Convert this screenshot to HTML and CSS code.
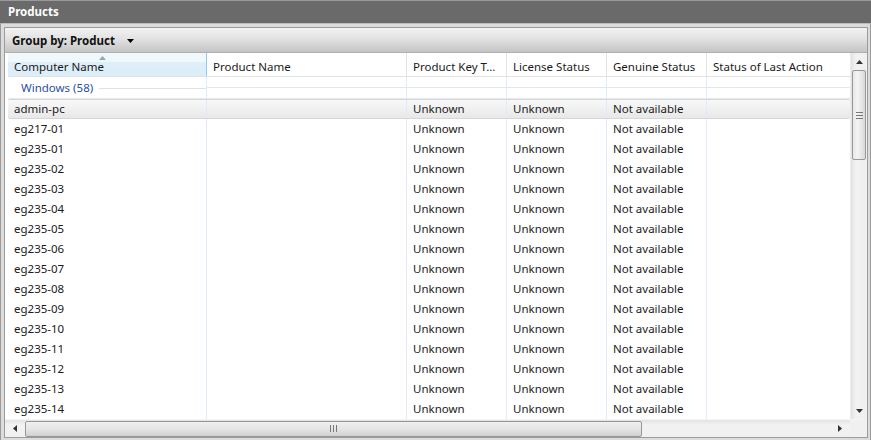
FILE: index.html
```html
<!DOCTYPE html>
<html>
<head>
<meta charset="utf-8">
<link rel="stylesheet" href="styles.css">
</head>
<body>
<div class="window">
  <div class="titlebar">Products</div>
  <div class="frame">
    <div class="panel">
      <div class="groupbar">
        <span class="groupby">Group by: Product</span>
        <svg class="dd" width="7" height="4" viewBox="0 0 7 4"><path d="M0 0H7L3.5 4Z" fill="#000"/></svg>
      </div>
      <div class="main">
        <div class="grid-area">
          <div class="gridbody">
            <div class="row header">
              <div class="cell sorted">Computer Name<svg class="sort" width="7" height="4" viewBox="0 0 7 4"><path d="M3.5 0L7 4H0Z" fill="#8fa9bd"/></svg></div>
              <div class="cell">Product Name</div>
              <div class="cell">Product Key T...</div>
              <div class="cell">License Status</div>
              <div class="cell">Genuine Status</div>
              <div class="cell">Status of Last Action</div>
            </div>
            <div class="row group">
              <div class="cell first"><span class="gname">Windows (58)</span></div>
              <div class="cell"></div><div class="cell"></div><div class="cell"></div><div class="cell"></div><div class="cell"></div>
            </div>
            <div class="row data hover"><div class="cell">admin-pc</div><div class="cell"></div><div class="cell">Unknown</div><div class="cell">Unknown</div><div class="cell">Not available</div><div class="cell"></div></div>
            <div class="row data"><div class="cell">eg217-01</div><div class="cell"></div><div class="cell">Unknown</div><div class="cell">Unknown</div><div class="cell">Not available</div><div class="cell"></div></div>
            <div class="row data"><div class="cell">eg235-01</div><div class="cell"></div><div class="cell">Unknown</div><div class="cell">Unknown</div><div class="cell">Not available</div><div class="cell"></div></div>
            <div class="row data"><div class="cell">eg235-02</div><div class="cell"></div><div class="cell">Unknown</div><div class="cell">Unknown</div><div class="cell">Not available</div><div class="cell"></div></div>
            <div class="row data"><div class="cell">eg235-03</div><div class="cell"></div><div class="cell">Unknown</div><div class="cell">Unknown</div><div class="cell">Not available</div><div class="cell"></div></div>
            <div class="row data"><div class="cell">eg235-04</div><div class="cell"></div><div class="cell">Unknown</div><div class="cell">Unknown</div><div class="cell">Not available</div><div class="cell"></div></div>
            <div class="row data"><div class="cell">eg235-05</div><div class="cell"></div><div class="cell">Unknown</div><div class="cell">Unknown</div><div class="cell">Not available</div><div class="cell"></div></div>
            <div class="row data"><div class="cell">eg235-06</div><div class="cell"></div><div class="cell">Unknown</div><div class="cell">Unknown</div><div class="cell">Not available</div><div class="cell"></div></div>
            <div class="row data"><div class="cell">eg235-07</div><div class="cell"></div><div class="cell">Unknown</div><div class="cell">Unknown</div><div class="cell">Not available</div><div class="cell"></div></div>
            <div class="row data"><div class="cell">eg235-08</div><div class="cell"></div><div class="cell">Unknown</div><div class="cell">Unknown</div><div class="cell">Not available</div><div class="cell"></div></div>
            <div class="row data"><div class="cell">eg235-09</div><div class="cell"></div><div class="cell">Unknown</div><div class="cell">Unknown</div><div class="cell">Not available</div><div class="cell"></div></div>
            <div class="row data"><div class="cell">eg235-10</div><div class="cell"></div><div class="cell">Unknown</div><div class="cell">Unknown</div><div class="cell">Not available</div><div class="cell"></div></div>
            <div class="row data"><div class="cell">eg235-11</div><div class="cell"></div><div class="cell">Unknown</div><div class="cell">Unknown</div><div class="cell">Not available</div><div class="cell"></div></div>
            <div class="row data"><div class="cell">eg235-12</div><div class="cell"></div><div class="cell">Unknown</div><div class="cell">Unknown</div><div class="cell">Not available</div><div class="cell"></div></div>
            <div class="row data"><div class="cell">eg235-13</div><div class="cell"></div><div class="cell">Unknown</div><div class="cell">Unknown</div><div class="cell">Not available</div><div class="cell"></div></div>
            <div class="row data"><div class="cell">eg235-14</div><div class="cell"></div><div class="cell">Unknown</div><div class="cell">Unknown</div><div class="cell">Not available</div><div class="cell"></div></div>
          </div>
          <div class="vscroll">
            <div class="arrowbtn"><svg width="7" height="4" viewBox="0 0 7 4"><path d="M3.5 0L7 4H0Z" fill="#333"/></svg></div>
            <div class="vtrack">
              <div class="vthumb"><svg width="7" height="7" viewBox="0 0 7 7"><path d="M0 .5H7M0 3.5H7M0 6.5H7" stroke="#777" stroke-width="1"/></svg></div>
            </div>
            <div class="arrowbtn"><svg width="7" height="4" viewBox="0 0 7 4"><path d="M0 0H7L3.5 4Z" fill="#333"/></svg></div>
          </div>
        </div>
        <div class="hrow">
          <div class="hscroll">
            <div class="harrow"><svg width="4" height="7" viewBox="0 0 4 7"><path d="M4 0V7L0 3.5Z" fill="#333"/></svg></div>
            <div class="hthumb"><svg width="7" height="7" viewBox="0 0 7 7"><path d="M.5 0V7M3.5 0V7M6.5 0V7" stroke="#777" stroke-width="1"/></svg></div>
            <div class="hspace"></div>
            <div class="harrow"><svg width="4" height="7" viewBox="0 0 4 7"><path d="M0 0V7L4 3.5Z" fill="#333"/></svg></div>
          </div>
          <div class="corner"></div>
        </div>
      </div>
    </div>
  </div>
</div>
</body>
</html>
```
FILE: styles.css
```css
html, body {
  margin: 0;
  padding: 0;
}
body {
  width: 871px;
  height: 440px;
  overflow: hidden;
  font-family: "Noto Sans", "Open Sans", sans-serif;
  font-size: 11.5px;
  color: #1a1a1a;
}
.window {
  height: 440px;
  display: flex;
  flex-direction: column;
  background: #d4d4d4;
}
.titlebar {
  height: 23px;
  background: #6a6a6a;
  border-top: 1px solid #9a9a9a;
  color: #fff;
  font-weight: bold;
  line-height: 22px;
  padding-left: 8px;
}
.frame {
  flex: 1;
  display: flex;
  padding: 3px 4px 2px 4px;
  border-top: 1px solid #bdbdbd;
  border-left: 1px solid #9a9a9a;
  border-right: 1px solid #9a9a9a;
  background: #dcdcdc;
}
.panel {
  flex: 1;
  display: flex;
  flex-direction: column;
  border: 1px solid #9c9c9c;
  background: #fff;
  margin-left: -1px;
  margin-right: -1px;
}
.groupbar {
  height: 24px;
  display: flex;
  align-items: center;
  padding-left: 7px;
  background: linear-gradient(#f3f3f3, #e2e2e2 45%, #c4c4c4);
  border-bottom: 1px solid #b0b0b0;
}
.groupby {
  font-weight: bold;
  color: #111;
}
.dd {
  margin-left: 12px;
  margin-top: 1px;
}
.main {
  flex: 1;
  display: flex;
  flex-direction: column;
}
.grid-area {
  flex: 1;
  display: flex;
}
.gridbody {
  flex: 1;
  padding-left: 3px;
  overflow: hidden;
}
.row {
  display: grid;
  grid-template-columns: 199px 200px 100px 100px 100px 143px;
}
.cell {
  padding-left: 6px;
  white-space: nowrap;
  overflow: hidden;
}
.row .cell {
  border-right: 1px solid #e1ecf7;
}
.row .cell:last-child {
  border-right: none;
}
.header {
  height: 23px;
  line-height: 19px;
  border-bottom: 1px solid #e2e2e2;
  background: #fff;
}
.header .cell {
  padding-top: 4px;
  border-right: 1px solid #e3e3e3;
  position: relative;
}
.header .cell:last-child {
  border-right: none;
}
.header .sorted {
  background: linear-gradient(#f1f8fc 0, #f1f8fc 40%, #dfeff9 41%, #dcedf8 100%);
  border-right: 1px solid #8fcbed;
}
.sort {
  position: absolute;
  left: 91px;
  top: 3px;
}
.group {
  height: 21px;
  border-bottom: 1px solid #e4e9ed;
}
.group .cell {
  position: relative;
}
.group .first {
  padding-left: 13px;
  line-height: 21px;
  display: flex;
  align-items: center;
}
.gname {
  color: #2c4fa3;
}
.group .first::after {
  content: "";
  flex: 1;
  height: 1px;
  background: #dce3e8;
  margin-left: 6px;
  margin-top: 1px;
}
.group .cell:not(.first)::after {
  content: "";
  position: absolute;
  left: 0;
  right: 0;
  top: 10px;
  height: 1px;
  background: #e2e8ec;
}
.data {
  height: 20px;
  line-height: 19px;
}
.data.hover {
  background: linear-gradient(#f8f8f8, #e8e8e8);
  border-top: 1px solid #d6d6d6;
  border-bottom: 1px solid #d6d6d6;
  height: 18px;
  line-height: 17px;
  border-radius: 2px;
}
.vscroll {
  width: 16px;
  background: linear-gradient(90deg, #e3e3e3, #f2f2f2 30%, #f0f0f0);
  border-left: 1px solid #ececec;
  display: flex;
  flex-direction: column;
}
.arrowbtn {
  height: 17px;
  display: flex;
  align-items: center;
  justify-content: center;
}
.vtrack {
  flex: 1;
  display: flex;
  flex-direction: column;
  padding: 0 1px;
}
.vthumb {
  height: 88px;
  border: 1px solid #979797;
  border-radius: 2px;
  background: linear-gradient(90deg, #e8e8e8, #f3f3f3 40%, #d8d8d8);
  display: flex;
  align-items: center;
  justify-content: center;
}
.hrow {
  height: 17px;
  display: flex;
  border-top: 1px solid #f5f5f5;
}
.hscroll {
  flex: 1;
  display: flex;
  align-items: center;
  background: linear-gradient(#e3e3e3, #f2f2f2 30%, #f0f0f0);
}
.harrow {
  width: 20px;
  height: 17px;
  display: flex;
  align-items: center;
  justify-content: center;
}
.hthumb {
  width: 615px;
  height: 14px;
  border: 1px solid #979797;
  border-radius: 2px;
  background: linear-gradient(#f0f0f0, #e6e6e6 45%, #d2d2d2);
  display: flex;
  align-items: center;
  justify-content: center;
}
.hspace {
  flex: 1;
}
.corner {
  width: 17px;
  background: #f0f0f0;
}
```
